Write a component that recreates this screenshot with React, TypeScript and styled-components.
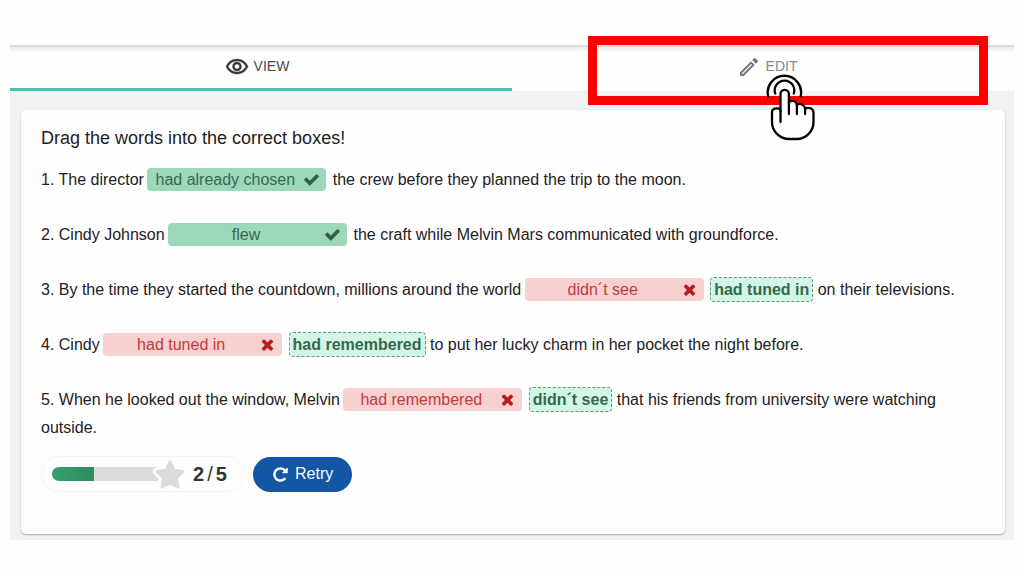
import React from "react";
import styled, { createGlobalStyle, css } from "styled-components";

const Global = createGlobalStyle`
  * { box-sizing: border-box; }
  body {
    margin: 0;
    background: #fefefe;
    color: #1e2124;
    font-family: "Liberation Sans", Arial, sans-serif;
    font-size: 16px;
  }
`;

const Page = styled.div`
  padding: 45px 10px 36px;
`;

const Tabs = styled.nav`
  position: relative;
  display: grid;
  grid-template-columns: 1fr 1fr;
  height: 46px;
  border-top: 2px solid #d9dcdc;
  box-shadow: inset 0 4px 4px -2px #e6e9e9;
`;

const Tab = styled.button<{ $active?: boolean }>`
  display: flex;
  align-items: center;
  justify-content: center;
  gap: 5px;
  padding: ${(p) => (p.$active ? "0 8px 4px 0" : "0 0 4px 8px")};
  border: 0;
  border-bottom: 3px solid ${(p) => (p.$active ? "#45c2ae" : "transparent")};
  background: none;
  color: ${(p) => (p.$active ? "#4a4d50" : "#85888a")};
  font-family: inherit;
  font-size: 14px;
  line-height: 16px;

  svg {
    margin-top: 2px;
    color: ${(p) => (p.$active ? "#333638" : "#737678")};
  }
`;

const Highlight = styled.div`
  position: absolute;
  top: -11px;
  right: 26px;
  width: 400px;
  height: 69px;
  border: 9px solid #fe0000;
  pointer-events: none;
`;

const Pointer = styled.svg`
  position: absolute;
  top: 27px;
  right: 198px;
  pointer-events: none;
`;

const Content = styled.main`
  padding: 19px 9px 6px 11px;
  background: #f0f2f4;
`;

const Card = styled.section`
  padding: 14px 20px 42px;
  border-radius: 5px;
  background: #fefefe;
  box-shadow: 0 1px 2px #a4a7a9;
`;

const Title = styled.h1`
  margin: 0 0 14px;
  font-size: 18px;
  font-weight: 400;
  line-height: 28px;
`;

const Sentence = styled.p`
  margin: 0 0 27px;
  line-height: 28px;

  &:last-of-type { margin-bottom: 14px; }
`;

const Drop = styled.span<{ $right?: boolean }>`
  display: inline-flex;
  align-items: center;
  width: 179px;
  height: 23px;
  margin-left: -1px;
  margin-right: 2px;
  padding: 0 6px 0 8px;
  border-radius: 4px;
  line-height: 23px;
  vertical-align: baseline;
  ${(p) =>
    p.$right
      ? css`background: #9dd8bb; color: #39674f; svg { color: #2f6149; }`
      : css`background: #f7d0d0; color: #c23a3e; svg { color: #b71c22; }`}
`;

const Word = styled.span`
  flex: 1;
  text-align: center;
  white-space: nowrap;
`;

const Mark = styled.svg`
  flex: none;
  width: 17px;
  height: 17px;
  margin-left: 8px;
`;

const Solution = styled.strong`
  display: inline-block;
  height: 25px;
  padding: 0 3px;
  border: 1px dashed #5f9c7d;
  border-radius: 4px;
  background: #d3f5e5;
  color: #35684e;
  line-height: 23px;
  vertical-align: baseline;
`;

const Footer = styled.footer`
  display: flex;
  align-items: center;
  gap: 8px;
`;

const Score = styled.div`
  display: flex;
  align-items: center;
  width: 204px;
  height: 36px;
  padding-left: 10px;
  border: 1px solid #f4f4f2;
  border-radius: 18px;
`;

const Points = styled.span`
  margin-left: 8px;
  color: #333638;
  font-size: 20px;
  font-weight: 700;

  i {
    margin: 0 3px;
    font-style: normal;
    font-weight: 400;
  }
`;

const Retry = styled.button`
  display: flex;
  align-items: center;
  gap: 6px;
  height: 35px;
  padding: 0 19px;
  border: 0;
  border-radius: 18px;
  background: #1256a4;
  color: #fafcff;
  font-family: inherit;
  font-size: 16px;
`;

const CHECK =
  "M1671 566q0 40-28 68l-724 724-136 136q-28 28-68 28t-68-28l-136-136-362-362q-28-28-28-68t28-68l136-136q28-28 68-28t68 28l294 295 656-657q28-28 68-28t68 28l136 136q28 28 28 68z";
const CROSS =
  "M1490 1322q0 40-28 68l-136 136q-28 28-68 28t-68-28l-294-294-294 294q-28 28-68 28t-68-28l-136-136q-28-28-28-68t28-68l294-294-294-294q-28-28-28-68t28-68l136-136q28-28 68-28t68 28l294 294 294-294q28-28 68-28t68 28l136 136q28 28 28 68t-28 68l-294 294 294 294q28 28 28 68z";
const REPEAT =
  "M1664 256v448q0 26-19 45t-45 19h-448q-42 0-59-40-17-39 14-69l138-138q-148-137-349-137-104 0-198.500 40.500t-163.500 109.500-109.500 163.500-40.500 198.500 40.500 198.500 109.500 163.500 163.500 109.500 198.500 40.500q119 0 225-52t179-147q7-10 23-12 15 0 25 9l137 138q9 8 9.500 20.500t-7.500 22.500q-109 132-264 204.500t-327 72.500q-156 0-298-61t-245-164-164-245-61-298 61-298 164-245 245-164 298-61q147 0 284.500 55.500t244.500 156.500l130-129q29-31 70-14 39 17 39 59z";

function Answer({ word, right }: { word: string; right?: boolean }) {
  return (
    <Drop $right={right}>
      <Word>{word}</Word>
      <Mark viewBox="0 0 1792 1792" fill="currentColor" role="img" aria-label={right ? "correct" : "wrong"}>
        <path d={right ? CHECK : CROSS} />
      </Mark>
    </Drop>
  );
}

function EyeIcon() {
  return (
    <svg width="24" height="24" viewBox="0 0 24 24" fill="currentColor" stroke="currentColor" strokeWidth="0.4" aria-hidden="true">
      <path d="M12 6c3.790 0 7.170 2.130 8.820 5.500C19.170 14.870 15.790 17 12 17s-7.170-2.130-8.820-5.500C4.830 8.130 8.210 6 12 6m0-2C7 4 2.730 7.110 1 11.500 2.730 15.890 7 19 12 19s9.270-3.110 11-7.500C21.270 7.110 17 4 12 4zm0 5c1.380 0 2.500 1.120 2.500 2.500S13.380 14 12 14s-2.500-1.120-2.500-2.500S10.620 9 12 9m0-2c-2.480 0-4.500 2.020-4.500 4.500S9.520 16 12 16s4.500-2.020 4.500-4.500S14.480 7 12 7z" />
    </svg>
  );
}

function PencilIcon() {
  return (
    <svg width="24" height="24" viewBox="0 0 24 24" aria-hidden="true">
      <path d="M4 17.700V20h2.300L16.400 9.900l-2.300-2.300z" fill="none" stroke="currentColor" strokeWidth="2" strokeLinejoin="round" />
      <path d="M20.710 7.040c.39-.39.39-1.020 0-1.410l-2.340-2.340c-.39-.39-1.020-.39-1.410 0l-1.700 1.700 3.750 3.750z" fill="currentColor" />
    </svg>
  );
}

function HandPointer() {
  return (
    <Pointer width="50" height="70" viewBox="0 0 50 70" fill="none" stroke="#000" strokeWidth="2.3" strokeLinecap="round" strokeLinejoin="round" aria-hidden="true">
      <path
        d="M14.500 37V20a4.200 4.200 0 0 1 8.400 0V28c3-2.500 7-1 8 2.500 3-1.500 7.500 0 8.200 4 3-1.500 8.400-.5 8.400 4V48C47.500 57 40 65 31 65H23C13.500 65 6 57 6 48V38c0-3.500 4.500-4.500 8.500-3z"
        fill="#fefefe"
      />
      <path d="M14.500 37V48M22.900 28V40M30.900 30.500V40M39.100 34.500V40" />
      <path d="M9.200 19.500a9.800 9.800 0 1 1 18.600 0M2.200 22.500a16.700 16.700 0 1 1 32.400 0" />
    </Pointer>
  );
}

function Progress() {
  return (
    <svg width="133" height="32" viewBox="0 0 133 32" role="img" aria-label="2 of 5 points">
      <defs>
        <linearGradient id="done">
          <stop offset="0" stopColor="#34a26c" />
          <stop offset="1" stopColor="#2c8c5f" />
        </linearGradient>
      </defs>
      <path d="M7 9H106V23H7A7 7 0 0 1 7 9z" fill="#dadcdc" />
      <path d="M7 9H42V23H7A7 7 0 0 1 7 9z" fill="url(#done)" />
      <path d="M118 4l4 8.200 9 1.300-6.500 6.500 1.500 9-8-4.200-8 4.200 1.500-9-6.500-6.500 9-1.300z" fill="#dadcdc" stroke="#fefefe" strokeWidth="8" strokeLinejoin="round" />
      <path d="M118 4l4 8.200 9 1.300-6.500 6.500 1.500 9-8-4.200-8 4.200 1.500-9-6.500-6.500 9-1.300z" fill="#dadcdc" stroke="#dadcdc" strokeWidth="3" strokeLinejoin="round" />
    </svg>
  );
}

export default function App() {
  return (
    <Page>
      <Global />
      <Tabs>
        <Tab type="button" $active>
          <EyeIcon />
          VIEW
        </Tab>
        <Tab type="button">
          <PencilIcon />
          EDIT
        </Tab>
        <Highlight />
        <HandPointer />
      </Tabs>
      <Content>
        <Card>
          <Title>Drag the words into the correct boxes!</Title>
          <Sentence>
            1. The director <Answer right word="had already chosen" /> the crew before they planned the trip to the moon.
          </Sentence>
          <Sentence>
            2. Cindy Johnson <Answer right word="flew" /> the craft while Melvin Mars communicated with groundforce.
          </Sentence>
          <Sentence>
            3. By the time they started the countdown, millions around the world <Answer word="didn´t see" />{" "}
            <Solution>had tuned in</Solution> on their televisions.
          </Sentence>
          <Sentence>
            4. Cindy <Answer word="had tuned in" /> <Solution>had remembered</Solution> to put her lucky charm in her
            pocket the night before.
          </Sentence>
          <Sentence>
            5. When he looked out the window, Melvin <Answer word="had remembered" /> <Solution>didn´t see</Solution>{" "}
            that his friends from university were watching outside.
          </Sentence>
          <Footer>
            <Score>
              <Progress />
              <Points>
                2<i>/</i>5
              </Points>
            </Score>
            <Retry type="button">
              <svg width="17" height="17" viewBox="0 0 1792 1792" fill="currentColor" aria-hidden="true">
                <path d={REPEAT} />
              </svg>
              Retry
            </Retry>
          </Footer>
        </Card>
      </Content>
    </Page>
  );
}
